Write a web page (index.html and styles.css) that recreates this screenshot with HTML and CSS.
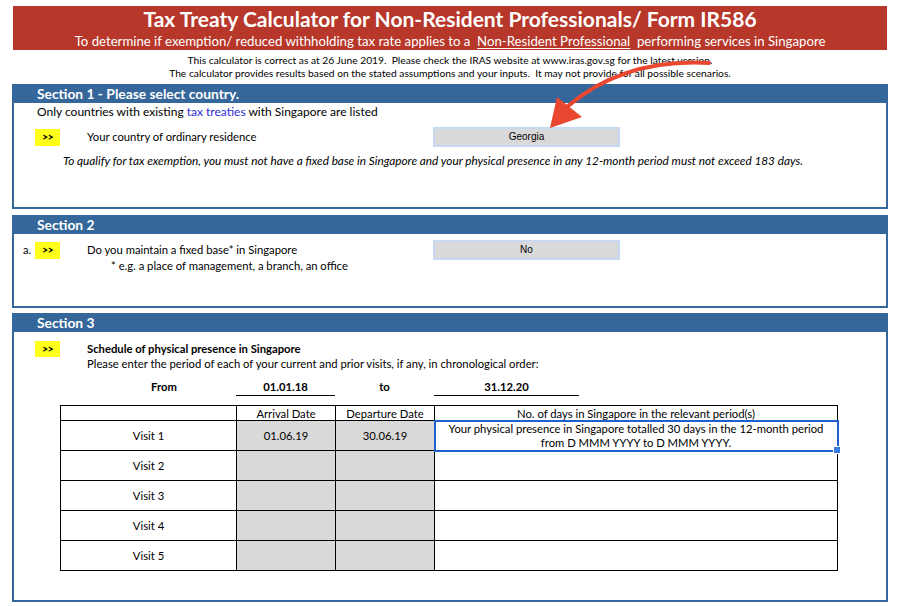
FILE: index.html
```html
<!DOCTYPE html>
<html lang="en">
<head>
<meta charset="utf-8">
<title>Tax Treaty Calculator</title>
<link rel="stylesheet" href="styles.css">
</head>
<body>
<div class="page">
  <header class="banner">
    <h1 class="title">Tax Treaty Calculator for Non-Resident Professionals/ Form IR586</h1>
    <p class="subtitle">To determine if exemption/ reduced withholding tax rate applies to a&nbsp; <u>Non-Resident Professional</u>&nbsp; performing services in Singapore</p>
  </header>

  <div class="notice">
    <p>This calculator is correct as at 26 June 2019.&nbsp; Please check the IRAS website at www.iras.gov.sg for the latest version.</p>
    <p>The calculator provides results based on the stated assumptions and your inputs.&nbsp; It may not provide for all possible scenarios.</p>
  </div>

  <section class="section s1">
    <div class="sec-head">Section 1 - Please select country.</div>
    <div class="sec-body body1">
      <p class="lead">Only countries with existing <span class="link">tax treaties</span> with Singapore are listed</p>
      <div class="q-row r1">
        <span class="qnum"></span>
        <span class="mark">&gt;&gt;</span>
        <span class="q-text">Your country of ordinary residence</span>
        <div class="select">Georgia</div>
      </div>
      <p class="note">To qualify for tax exemption, you must not have a fixed base in Singapore and your physical presence in any 12-month period must not exceed 183 days.</p>
    </div>
  </section>

  <section class="section s2">
    <div class="sec-head">Section 2</div>
    <div class="sec-body body2">
      <div class="q-row r2">
        <span class="qnum">a.</span>
        <span class="mark">&gt;&gt;</span>
        <span class="q-text">Do you maintain a fixed base* in Singapore</span>
        <div class="select">No</div>
      </div>
      <p class="footnote">* e.g. a place of management, a branch, an office</p>
    </div>
  </section>

  <section class="section s3">
    <div class="sec-head">Section 3</div>
    <div class="sec-body body3">
      <div class="q-row r3">
        <span class="qnum"></span>
        <span class="mark">&gt;&gt;</span>
        <span class="q-text bold">Schedule of physical presence in Singapore</span>
      </div>
      <p class="instr">Please enter the period of each of your current and prior visits, if any, in chronological order:</p>
      <div class="period">
        <span class="p-from">From</span>
        <span class="p-date">01.01.18</span>
        <span class="p-to">to</span>
        <span class="p-date p-end">31.12.20</span>
      </div>
      <table class="visits">
        <colgroup>
          <col class="c1"><col class="c2"><col class="c3"><col class="c4">
        </colgroup>
        <thead>
          <tr class="hrow"><th></th><th>Arrival Date</th><th>Departure Date</th><th>No. of days in Singapore in the relevant period(s)</th></tr>
        </thead>
        <tbody>
          <tr><td>Visit 1</td><td class="input">01.06.19</td><td class="input">30.06.19</td><td class="result selected">Your physical presence in Singapore totalled 30 days in the 12-month period<br>from D MMM YYYY to D MMM YYYY.</td></tr>
          <tr><td>Visit 2</td><td class="input"></td><td class="input"></td><td class="result"></td></tr>
          <tr><td>Visit 3</td><td class="input"></td><td class="input"></td><td class="result"></td></tr>
          <tr><td>Visit 4</td><td class="input"></td><td class="input"></td><td class="result"></td></tr>
          <tr><td>Visit 5</td><td class="input"></td><td class="input"></td><td class="result"></td></tr>
        </tbody>
      </table>
    </div>
  </section>

  <svg class="arrow" width="906" height="606" viewBox="0 0 906 606" aria-hidden="true">
    <path d="M709 63 Q 625 58 568 106" fill="none" stroke="#e9472f" stroke-width="4" stroke-linecap="round"/>
    <polygon points="557,97 582,117 550,128" fill="#e9472f"/>
  </svg>
</div>
</body>
</html>
```

FILE: styles.css
```css
* { box-sizing: border-box; }

body {
  margin: 0;
  background: #ffffff;
  color: #000000;
  font-family: Lato, "Open Sans", sans-serif;
}

p { margin: 0; }

.page {
  position: relative;
  width: 906px;
  height: 606px;
  overflow: hidden;
}

/* Banner */
.banner {
  margin: 6px 19px 0 13px;
  height: 44px;
  background: #b7372a;
  color: #ffffff;
  text-align: center;
  padding-top: 1px;
}

.title {
  margin: 0;
  font-size: 21px;
  line-height: 24px;
  font-weight: 700;
}

.subtitle {
  margin-top: 2px;
  font-size: 13.2px;
  line-height: 16px;
}

.subtitle u { text-underline-offset: 2px; }

/* Notice */
.notice {
  margin: 0 19px 0 13px;
  padding-top: 4px;
  height: 34px;
  text-align: center;
  font-size: 10.25px;
  line-height: 13px;
}

/* Sections */
.section {
  margin-left: 12px;
  width: 876px;
  border: 2px solid #35679a;
  background: #ffffff;
}

.s2 { margin-top: 6px; }
.s3 { margin-top: 5px; }

.sec-head {
  height: 17px;
  background: #35679a;
  color: #ffffff;
  font-weight: 700;
  font-size: 13.8px;
  line-height: 16px;
  padding-left: 23px;
}

.sec-body {
  font-size: 11.25px;
  line-height: 14px;
}

.body1 { height: 104px; padding-top: 1px; }
.body2 { height: 72px; padding-top: 6px; }
.body3 { height: 268px; padding-top: 8px; }

.lead {
  padding-left: 23px;
  font-size: 12px;
  line-height: 16px;
}

.link { color: #2b2bd6; }

/* Question rows */
.q-row {
  display: grid;
  grid-template-columns: 12px 25px 373px 187px;
  align-items: center;
  padding-left: 9px;
  height: 20px;
}

.q-row .q-text { margin-left: 27px; white-space: nowrap; }

.r1 { margin-top: 7px; }
.r3 { height: 17px; }

.qnum { font-size: 11px; }

.mark {
  display: block;
  height: 17px;
  background: #ffff1a;
  font-size: 10.5px;
  font-weight: 700;
  line-height: 17px;
  text-align: center;
  letter-spacing: -0.5px;
}

.r3 .mark { height: 16px; line-height: 16px; }

.bold { font-weight: 700; }

.select {
  height: 20px;
  border: 2px solid #c6d9f0;
  background: #d9d9d9;
  text-align: center;
  font-family: "Liberation Sans", Arial, sans-serif;
  font-size: 10px;
  line-height: 16px;
}

.note {
  margin-top: 7px;
  padding-left: 49px;
  font-style: italic;
  font-size: 11.8px;
  white-space: nowrap;
}

.footnote {
  margin-top: -1px;
  padding-left: 97px;
}

.instr {
  padding-left: 73px;
}

/* Period row */
.period {
  display: grid;
  grid-template-columns: 176px 99px 99px 145px;
  margin: 9px 0 0 46px;
  font-weight: 700;
  text-align: center;
  line-height: 14px;
}

.p-from { padding-left: 32px; }

.p-date {
  border-bottom: 1px solid #000000;
  padding-bottom: 1px;
}

/* Visits table */
.visits {
  margin: 9px 0 0 46px;
  border-collapse: collapse;
  table-layout: fixed;
  width: 777px;
  font-size: 11.25px;
  line-height: 14px;
}

.c1 { width: 176px; }
.c2 { width: 99px; }
.c3 { width: 99px; }
.c4 { width: 403px; }

.visits th,
.visits td {
  border: 1px solid #000000;
  padding: 0;
  text-align: center;
  font-weight: 400;
}

.hrow th { height: 15px; line-height: 13px; }

.visits td { height: 30px; }

.visits td.input { background: #d9d9d9; }

.visits td.selected {
  position: relative;
  outline: 2px solid #1f5fcf;
  outline-offset: -1px;
  vertical-align: top;
  padding-top: 1px;
}

.visits td.selected::after {
  content: "";
  position: absolute;
  right: -4px;
  bottom: -4px;
  width: 6px;
  height: 6px;
  background: #3b7be0;
  border: 1px solid #ffffff;
}

/* Annotation arrow overlay */
.arrow {
  position: absolute;
  left: 0;
  top: 0;
  pointer-events: none;
}
```
